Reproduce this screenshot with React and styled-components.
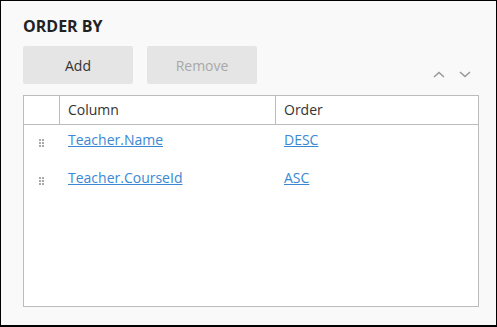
import React from 'react'
import styled, { createGlobalStyle } from 'styled-components'

const Global = createGlobalStyle`
  body {
    margin: 0;
    font-family: "Open Sans", "Liberation Sans", sans-serif;
    color: #333;
  }
`

const rows = [
  { column: 'Teacher.Name', order: 'DESC' },
  { column: 'Teacher.CourseId', order: 'ASC' },
]

const App = () => {
  return (
    <>
      <Global />
      <Panel>
        <Title>ORDER BY</Title>
        <Toolbar>
          <Button>Add</Button>
          <Button disabled>Remove</Button>
          <Arrows>
            <Arrow aria-label='Move up'>
              <svg width='12' height='7' viewBox='0 0 12 7'>
                <path d='M1 6 L6 1.5 L11 6' fill='none' stroke='#9a9a9a' strokeWidth='1.6' />
              </svg>
            </Arrow>
            <Arrow aria-label='Move down'>
              <svg width='12' height='7' viewBox='0 0 12 7'>
                <path d='M1 1 L6 5.5 L11 1' fill='none' stroke='#9a9a9a' strokeWidth='1.6' />
              </svg>
            </Arrow>
          </Arrows>
        </Toolbar>
        <Table>
          <HeadRow>
            <HeadCell />
            <HeadCell>Column</HeadCell>
            <HeadCell last>Order</HeadCell>
          </HeadRow>
          {rows.map((r) => (
            <Row key={r.column}>
              <Handle>
                <Dots>
                  {Array.from({ length: 6 }).map((_, i) => <Dot key={i} />)}
                </Dots>
              </Handle>
              <Cell><Link href='#'>{r.column}</Link></Cell>
              <Cell><Link href='#'>{r.order}</Link></Cell>
            </Row>
          ))}
        </Table>
      </Panel>
    </>
  )
}

const Panel = styled.div`
  box-sizing: border-box;
  width: 497px;
  height: 327px;
  border: 1px solid #000;
  border-bottom-width: 2px;
  background: #f9f9f9;
  padding: 14px 17px 0 22px;
  display: flex;
  flex-direction: column;
`

const Title = styled.h2`
  margin: 0;
  font-size: 16px;
  line-height: 22px;
  font-weight: 700;
  color: #222;
`

const Toolbar = styled.div`
  display: flex;
  align-items: flex-end;
  gap: 14px;
  margin-top: 9px;
`

const Button = styled.button`
  width: 110px;
  height: 38px;
  border: none;
  border-radius: 2px;
  background: #e5e5e5;
  font-family: inherit;
  font-size: 14px;
  color: ${(p) => (p.disabled ? '#a8a8a8' : '#333')};
  padding: 0;
`

const Arrows = styled.div`
  margin-left: auto;
  display: flex;
  gap: 14px;
  padding: 0 8px 6px 0;
`

const Arrow = styled.span`
  display: flex;
  width: 12px;
  height: 7px;
`

const Table = styled.div`
  margin-top: 11px;
  height: 212px;
  box-sizing: border-box;
  border: 1px solid #bcbcbc;
  background: #fff;
`

const HeadRow = styled.div`
  display: grid;
  grid-template-columns: 36px 216px 1fr;
  border-bottom: 1px solid #bcbcbc;
`

const HeadCell = styled.div`
  height: 28px;
  box-sizing: border-box;
  padding: 4px 8px;
  font-size: 14px;
  line-height: 20px;
  color: #333;
  border-right: ${(p) => (p.last ? 'none' : '1px solid #bcbcbc')};
`

const Row = styled.div`
  display: grid;
  grid-template-columns: 36px 216px 1fr;
  height: 38px;
`

const Cell = styled.div`
  padding: 5px 8px 0;
  font-size: 14px;
  line-height: 20px;
`

const Handle = styled.div`
  display: flex;
  justify-content: center;
  padding-top: 14px;
  padding-right: 2px;
`

const Dots = styled.div`
  display: grid;
  grid-template-columns: 2px 2px;
  grid-auto-rows: 2px;
  gap: 1px 1px;
`

const Dot = styled.span`
  background: #a9a9a9;
`

const Link = styled.a`
  color: #3a88d4;
  text-decoration: underline;
`

export default App
